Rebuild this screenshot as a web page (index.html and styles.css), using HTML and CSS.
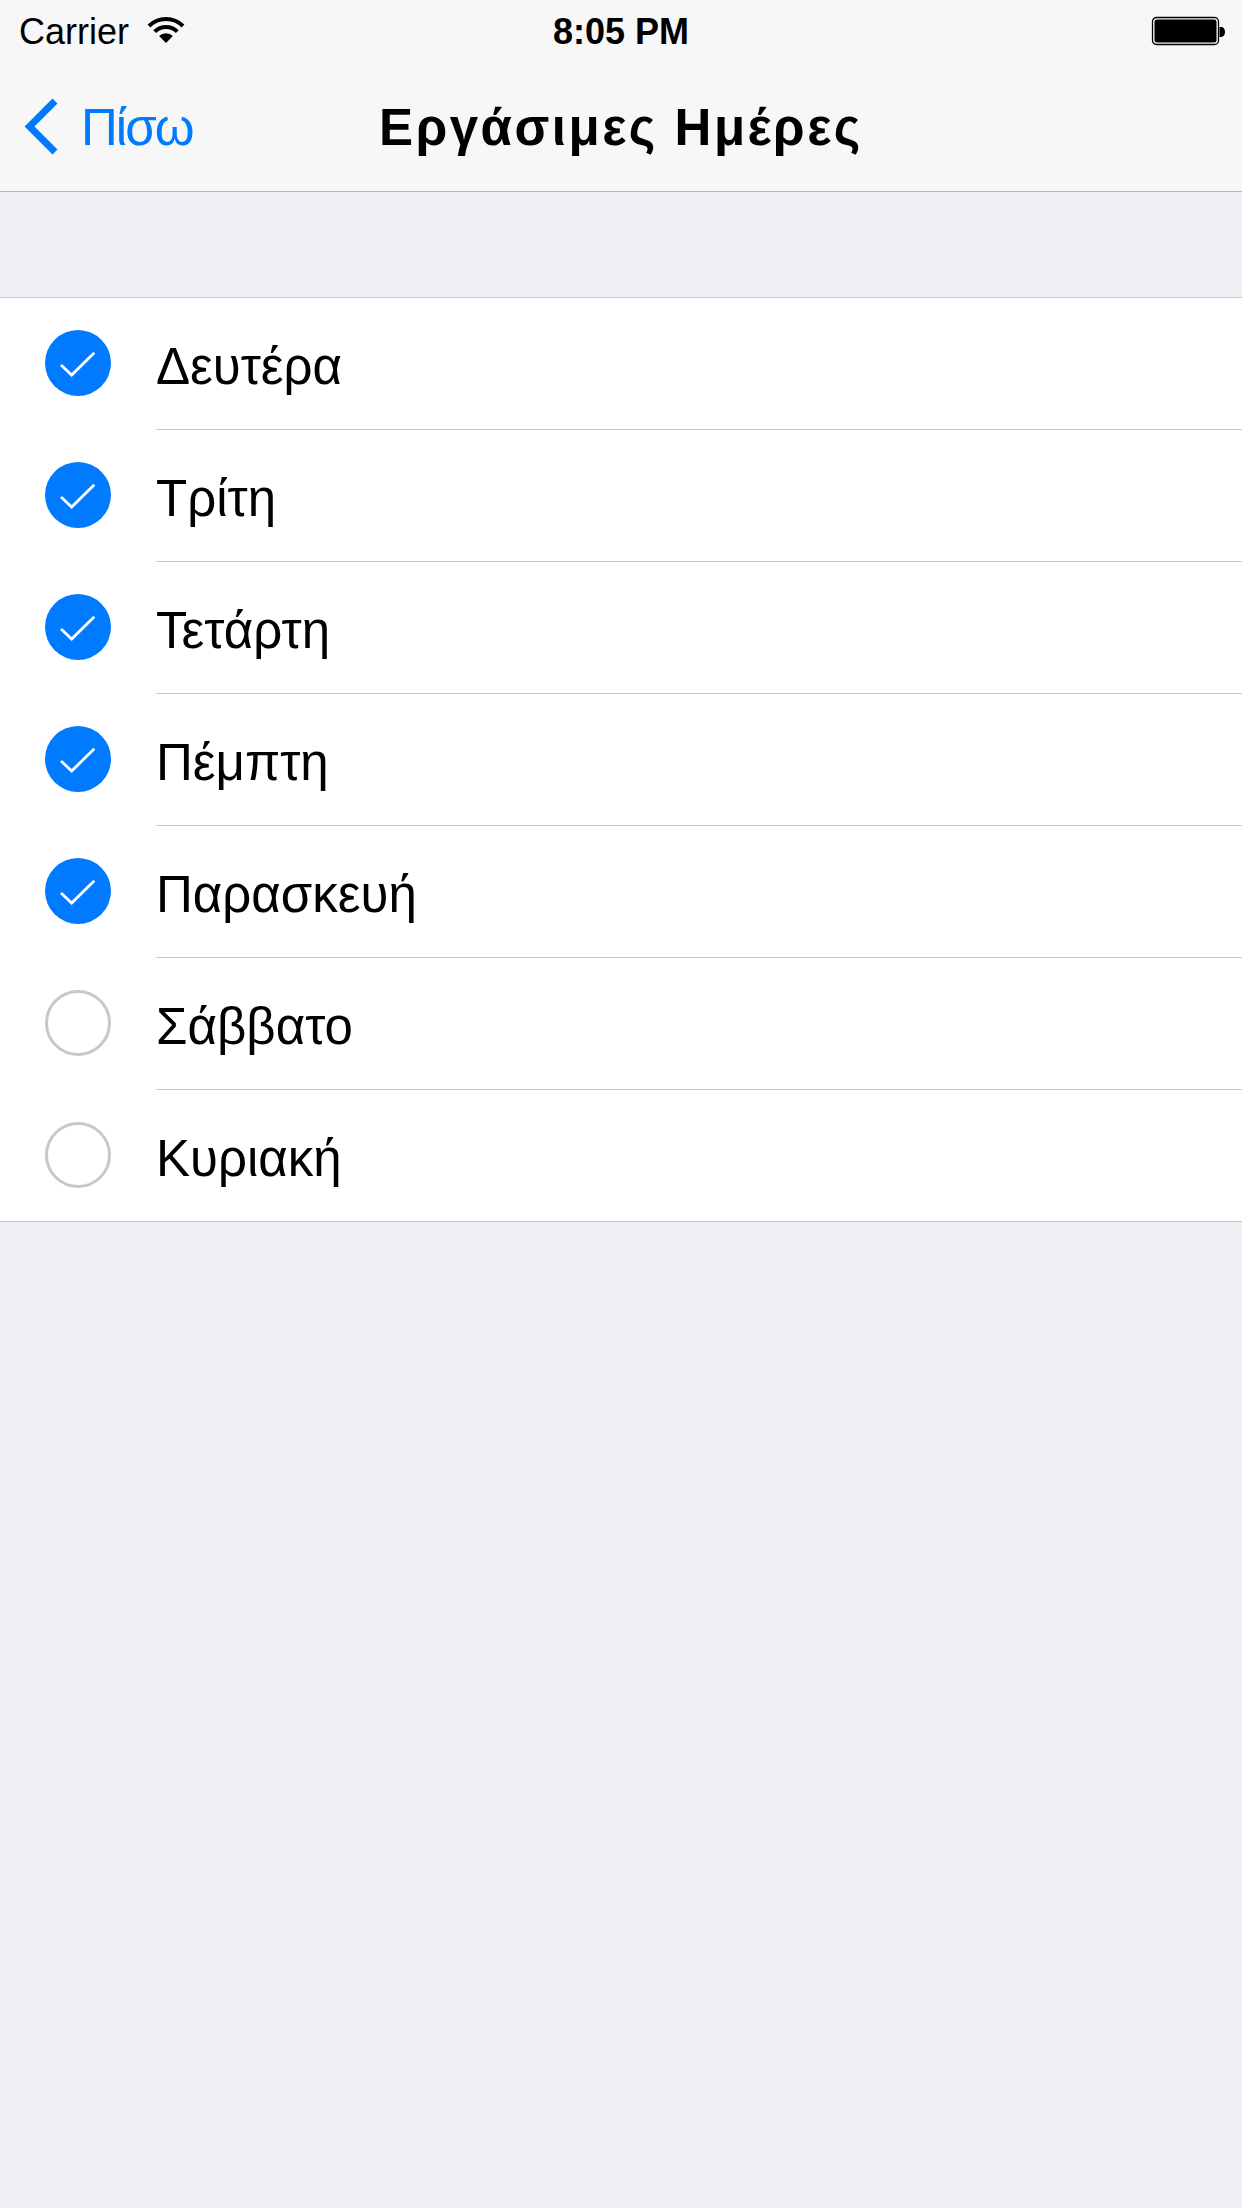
FILE: index.html
```html
<!DOCTYPE html>
<html lang="el">
<head>
<meta charset="utf-8">
<title>Εργάσιμες Ημέρες</title>
<link rel="stylesheet" href="styles.css">
</head>
<body>
<div class="top">
  <div class="status">
    <div class="status-left">
      <span class="carrier">Carrier</span>
      <svg class="wifi" width="40" height="30" viewBox="0 0 40 30">
        <path d="M3 11 A24 24 0 0 1 37 11" fill="none" stroke="#000" stroke-width="4"/>
        <path d="M8.7 16.7 A16 16 0 0 1 31.3 16.7" fill="none" stroke="#000" stroke-width="4"/>
        <path d="M20 28 L13.1 21.1 A9.7 9.7 0 0 1 26.9 21.1 Z" fill="#000"/>
      </svg>
    </div>
    <div class="time">8:05 PM</div>
    <div class="status-right">
      <svg class="battery" width="76" height="30" viewBox="0 0 76 30">
        <rect x="1.5" y="1.5" width="66" height="27" rx="4" fill="none" stroke="#000" stroke-width="1.3"/>
        <rect x="3.5" y="3.5" width="62" height="23" rx="2.5" fill="#000"/>
        <path d="M68.5 11 H70.5 A3.5 5 0 0 1 70.5 21 H68.5 Z" fill="#000"/>
      </svg>
    </div>
  </div>
  <div class="nav">
    <div class="back">
      <svg class="chevron" width="44" height="66" viewBox="0 0 44 66">
        <path d="M35 8 L9.5 33.5 L35 59" fill="none" stroke="#007aff" stroke-width="7" stroke-linejoin="miter"/>
      </svg>
      <span class="back-label">Πίσω</span>
    </div>
    <div class="title">Εργάσιμες Ημέρες</div>
    <div class="nav-right"></div>
  </div>
</div>

<div class="spacer"></div>

<ul class="list">
  <li class="row">
    <svg class="check" width="66" height="66" viewBox="0 0 66 66"><circle cx="33" cy="33" r="33" fill="#007aff"/><path d="M16 35 L26.7 45 L49.3 22.7" fill="none" stroke="#fff" stroke-width="2.8"/></svg>
    <div class="cell"><span class="label">Δευτέρα</span></div>
  </li>
  <li class="row">
    <svg class="check" width="66" height="66" viewBox="0 0 66 66"><circle cx="33" cy="33" r="33" fill="#007aff"/><path d="M16 35 L26.7 45 L49.3 22.7" fill="none" stroke="#fff" stroke-width="2.8"/></svg>
    <div class="cell"><span class="label">Τρίτη</span></div>
  </li>
  <li class="row">
    <svg class="check" width="66" height="66" viewBox="0 0 66 66"><circle cx="33" cy="33" r="33" fill="#007aff"/><path d="M16 35 L26.7 45 L49.3 22.7" fill="none" stroke="#fff" stroke-width="2.8"/></svg>
    <div class="cell"><span class="label">Τετάρτη</span></div>
  </li>
  <li class="row">
    <svg class="check" width="66" height="66" viewBox="0 0 66 66"><circle cx="33" cy="33" r="33" fill="#007aff"/><path d="M16 35 L26.7 45 L49.3 22.7" fill="none" stroke="#fff" stroke-width="2.8"/></svg>
    <div class="cell"><span class="label">Πέμπτη</span></div>
  </li>
  <li class="row">
    <svg class="check" width="66" height="66" viewBox="0 0 66 66"><circle cx="33" cy="33" r="33" fill="#007aff"/><path d="M16 35 L26.7 45 L49.3 22.7" fill="none" stroke="#fff" stroke-width="2.8"/></svg>
    <div class="cell"><span class="label">Παρασκευή</span></div>
  </li>
  <li class="row">
    <svg class="check" width="66" height="66" viewBox="0 0 66 66"><circle cx="33" cy="33" r="31.5" fill="none" stroke="#c7c7cc" stroke-width="3"/></svg>
    <div class="cell"><span class="label">Σάββατο</span></div>
  </li>
  <li class="row">
    <svg class="check" width="66" height="66" viewBox="0 0 66 66"><circle cx="33" cy="33" r="31.5" fill="none" stroke="#c7c7cc" stroke-width="3"/></svg>
    <div class="cell"><span class="label">Κυριακή</span></div>
  </li>
</ul>
</body>
</html>
```

FILE: styles.css
```css
html, body {
  margin: 0;
  padding: 0;
}
body {
  background: #efeff4;
  font-family: "Liberation Sans", Arial, sans-serif;
  color: #000;
  min-height: 2208px;
}
.top {
  background: #f7f7f7;
  border-bottom: 1px solid #b5b5b9;
}
.status {
  height: 60px;
  display: grid;
  grid-template-columns: 1fr auto 1fr;
  align-items: center;
  font-size: 36px;
  line-height: 36px;
}
.status-left {
  display: flex;
  align-items: center;
  padding-left: 19px;
}
.carrier {
  display: block;
  margin-top: 4px;
}
.wifi {
  display: block;
  margin-left: 17px;
  margin-top: 0;
}
.time {
  font-weight: bold;
  margin-top: 4px;
}
.status-right {
  display: flex;
  justify-content: flex-end;
  padding-right: 15px;
}
.battery {
  display: block;
  margin-top: 1px;
}
.nav {
  height: 131px;
  display: grid;
  grid-template-columns: 1fr auto 1fr;
  align-items: center;
}
.back {
  display: flex;
  align-items: center;
  padding-left: 20px;
  color: #007aff;
}
.chevron {
  display: block;
}
.back-label {
  font-size: 51px;
  line-height: 51px;
  margin-left: 17px;
  margin-top: 3px;
  letter-spacing: -2px;
}
.title {
  font-size: 51px;
  line-height: 51px;
  font-weight: bold;
  margin-top: 3px;
  letter-spacing: 2.5px;
}
.spacer {
  height: 105px;
}
.list {
  list-style: none;
  margin: 0;
  padding: 0;
  background: #fff;
  border-top: 1px solid #c8c7cc;
  border-bottom: 1px solid #c8c7cc;
}
.row {
  display: flex;
  align-items: flex-start;
  padding-left: 45px;
}
.check {
  display: block;
  flex: none;
  margin-top: 32px;
}
.cell {
  flex: 1;
  height: 131px;
  margin-left: 45px;
  display: flex;
  align-items: center;
  border-bottom: 1px solid #c8c7cc;
}
.row:last-child .cell {
  border-bottom: none;
}
.label {
  font-size: 51px;
  line-height: 51px;
  margin-top: 6px;
}
```
